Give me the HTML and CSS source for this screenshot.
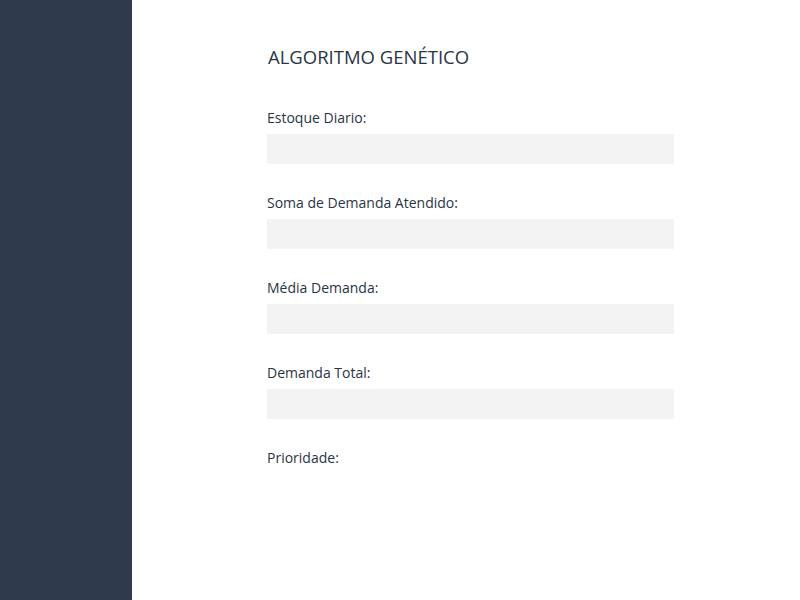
FILE: index.html
```html
<!DOCTYPE html>
<html lang="pt">
<head>
<meta charset="utf-8">
<title>Algoritmo Genético</title>
<link rel="stylesheet" href="styles.css">
</head>
<body>
<div class="layout">
  <aside class="sidebar"></aside>
  <main class="content">
    <h1 class="title">ALGORITMO GENÉTICO</h1>
    <form class="form">
      <div class="field">
        <label class="label">Estoque Diario:</label>
        <div class="input"></div>
      </div>
      <div class="field">
        <label class="label">Soma de Demanda Atendido:</label>
        <div class="input"></div>
      </div>
      <div class="field">
        <label class="label">Média Demanda:</label>
        <div class="input"></div>
      </div>
      <div class="field">
        <label class="label">Demanda Total:</label>
        <div class="input"></div>
      </div>
      <div class="field">
        <label class="label">Prioridade:</label>
      </div>
    </form>
  </main>
</div>
</body>
</html>
```

FILE: styles.css
```css
html, body {
  margin: 0;
  padding: 0;
  height: 100%;
  background: #ffffff;
  font-family: "Open Sans", "Noto Sans", sans-serif;
  color: #2d3748;
}
.layout {
  display: flex;
  height: 600px;
}
.sidebar {
  width: 132px;
  flex: none;
  background: #2f3b4d;
}
.content {
  flex: 1;
  padding: 45px 0 0 135px;
}
.title {
  margin: 0 0 0 1px;
  font-size: 18.5px;
  line-height: 24px;
  font-weight: 500;
  color: #2a3444;
}
.form {
  display: flex;
  flex-direction: column;
  gap: 29px;
  margin-top: 39px;
  width: 407px;
}
.field {
  display: flex;
  flex-direction: column;
  gap: 6px;
}
.label {
  font-size: 14px;
  line-height: 20px;
  font-weight: 500;
  color: #2a3444;
}
.input {
  height: 30px;
  background: #f3f3f3;
}
```
